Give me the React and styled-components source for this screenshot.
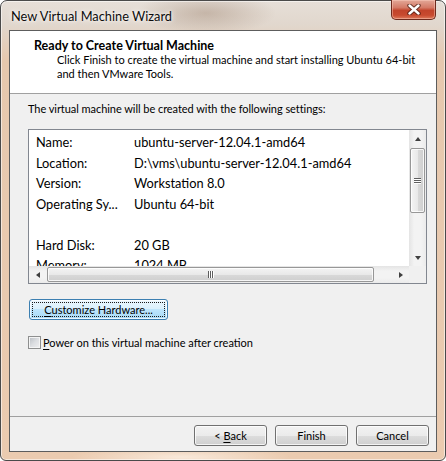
import React from 'react'
import styled, { createGlobalStyle } from 'styled-components'

const settings = [
    ['Name:', 'ubuntu-server-12.04.1-amd64'],
    ['Location:', 'D:\\vms\\ubuntu-server-12.04.1-amd64'],
    ['Version:', 'Workstation 8.0'],
    ['Operating Sy...', 'Ubuntu 64-bit'],
    ['', ''],
    ['Hard Disk:', '20 GB'],
    ['Memory:', '1024 MB'],
]

export default function App() {
    const spreadRows = () => settings.map((s, i) =>
        <Row key={i}>
            <Label>{s[0]}</Label>
            <Value>{s[1]}</Value>
        </Row>)

    return (
        <>
            <GlobalStyle />
            <Window>
                <TitleBar>
                    <Title>New Virtual Machine Wizard</Title>
                    <CloseButton>
                        <svg width="14" height="11" viewBox="0 0 14 11">
                            <path d="M2.5 1.5 L11.5 9.5 M11.5 1.5 L2.5 9.5" stroke="rgba(70,25,15,0.75)" strokeWidth="4.4" strokeLinecap="round" fill="none" />
                            <path d="M2.5 1.5 L11.5 9.5 M11.5 1.5 L2.5 9.5" stroke="#fff" strokeWidth="2.4" strokeLinecap="round" fill="none" />
                        </svg>
                    </CloseButton>
                </TitleBar>
                <Client>
                    <Header>
                        <Heading>Ready to Create Virtual Machine</Heading>
                        <Description>
                            Click Finish to create the virtual machine and start installing Ubuntu 64-bit<br />
                            and then VMware Tools.
                        </Description>
                    </Header>
                    <Body>
                        <Intro>The virtual machine will be created with the following settings:</Intro>
                        <ListBox>
                            <Rows>{spreadRows()}</Rows>
                            <VScroll>
                                <ArrowCell><Arrow dir="up" /></ArrowCell>
                                <VThumb><VGrip><i /><i /><i /></VGrip></VThumb>
                                <Track />
                                <ArrowCell><Arrow dir="down" /></ArrowCell>
                            </VScroll>
                            <HScroll>
                                <ArrowCell><Arrow dir="left" /></ArrowCell>
                                <HThumb><HGrip><i /><i /><i /></HGrip></HThumb>
                                <Track />
                                <ArrowCell><Arrow dir="right" /></ArrowCell>
                            </HScroll>
                            <Corner />
                        </ListBox>
                        <CustomizeButton $focused>
                            <FocusRect><u>C</u>ustomize Hardware...</FocusRect>
                        </CustomizeButton>
                        <CheckRow>
                            <CheckBox />
                            <span><u>P</u>ower on this virtual machine after creation</span>
                        </CheckRow>
                    </Body>
                    <Footer>
                        <Button>&lt;&nbsp;<u>B</u>ack</Button>
                        <Button>Finish</Button>
                        <Button>Cancel</Button>
                    </Footer>
                </Client>
            </Window>
        </>
    )
}

const GlobalStyle = createGlobalStyle`
    html, body {
        margin: 0;
        padding: 0;
        background: #fff;
    }
    body {
        font-family: Lato, "Open Sans", sans-serif;
        font-size: 11px;
        color: #000;
    }
    u {
        text-decoration-thickness: 1px;
        text-underline-offset: 2px;
    }
`

const Window = styled.div`
    box-sizing: border-box;
    width: 446px;
    height: 461px;
    border: 1px solid #4a4a4a;
    border-radius: 7px 7px 6px 6px;
    padding: 0 8px 8px;
    display: flex;
    flex-direction: column;
    background:
        radial-gradient(ellipse 70px 22px at 205px 12px, rgba(120, 85, 60, 0.28), transparent),
        radial-gradient(ellipse 110px 10px at 180px 456px, rgba(255, 245, 235, 0.7), transparent),
        linear-gradient(to bottom, #e6dfd8 0px, #e1d7cd 24px, #e6c8ae 60px, #ebcbb0 100%);
    box-shadow: inset 0 0 0 1px rgba(255, 255, 255, 0.55);
`

const TitleBar = styled.div`
    height: 29px;
    display: flex;
    justify-content: space-between;
    align-items: flex-start;
`

const Title = styled.div`
    padding: 8px 0 0 2px;
    font-size: 12.8px;
    line-height: 15px;
    color: #0c0c0c;
    text-shadow: 0 0 6px rgba(255, 255, 255, 0.95), 0 0 3px rgba(255, 255, 255, 0.9);
`

const CloseButton = styled.div`
    box-sizing: border-box;
    width: 45px;
    height: 20px;
    margin: -1px 1px 0 0;
    border: 1px solid #6e2a1d;
    border-top: none;
    border-radius: 0 0 5px 5px;
    display: flex;
    align-items: center;
    justify-content: center;
    background: linear-gradient(to bottom, #e3a898 0%, #d47a66 40%, #c2442b 55%, #c84a2f 80%, #de7a5c 100%);
    box-shadow: inset 0 0 0 1px rgba(255, 210, 195, 0.45);
`

const Client = styled.div`
    flex: 1;
    display: flex;
    flex-direction: column;
    border: 1px solid #5d5d5d;
    background: #f0f0f0;
`

const Header = styled.div`
    box-sizing: border-box;
    height: 63px;
    padding: 7px 0 0 24px;
    background: #fff;
    border-bottom: 1px solid #a0a0a0;
`

const Heading = styled.div`
    font-size: 12.5px;
    font-weight: 700;
    line-height: 15px;
`

const Description = styled.div`
    padding-left: 23px;
    line-height: 14px;
    white-space: nowrap;
`

const Body = styled.div`
    flex: 1;
    display: flex;
    flex-direction: column;
    align-items: flex-start;
    padding: 7px 0 0 18px;
`

const Intro = styled.div`
    line-height: 15px;
    letter-spacing: -0.05px;
`

const ListBox = styled.div`
    box-sizing: border-box;
    margin-top: 13px;
    width: 399px;
    height: 155px;
    border: 1px solid #828790;
    background: #fff;
    display: grid;
    grid-template-columns: 1fr 17px;
    grid-template-rows: 1fr 17px;
    overflow: hidden;
`

const Rows = styled.div`
    overflow: hidden;
    min-height: 0;
    padding-top: 2px;
    font-size: 12.8px;
`

const Row = styled.div`
    display: flex;
    height: 20.5px;
    line-height: 20.5px;
    white-space: nowrap;
`

const Label = styled.span`
    width: 98px;
    padding-left: 7px;
    flex-shrink: 0;
`

const Value = styled.span``

const VScroll = styled.div`
    display: flex;
    flex-direction: column;
    background: linear-gradient(to right, #e4e4e4, #f3f3f3 30%, #f3f3f3 70%, #ebebeb);
`

const HScroll = styled.div`
    display: flex;
    background: linear-gradient(to bottom, #e4e4e4, #f3f3f3 30%, #f3f3f3 70%, #ebebeb);
`

const Track = styled.div`
    flex: 1;
`

const Corner = styled.div`
    background: #f0f0f0;
`

const ArrowCell = styled.div`
    width: 17px;
    height: 17px;
    flex-shrink: 0;
    display: flex;
    align-items: center;
    justify-content: center;
`

const Arrow = styled.div`
    width: 0;
    height: 0;
    ${p => p.dir === 'up' && `
        border-left: 3.5px solid transparent;
        border-right: 3.5px solid transparent;
        border-bottom: 4px solid #404040;
    `}
    ${p => p.dir === 'down' && `
        border-left: 3.5px solid transparent;
        border-right: 3.5px solid transparent;
        border-top: 4px solid #404040;
    `}
    ${p => p.dir === 'left' && `
        border-top: 3.5px solid transparent;
        border-bottom: 3.5px solid transparent;
        border-right: 4px solid #404040;
    `}
    ${p => p.dir === 'right' && `
        border-top: 3.5px solid transparent;
        border-bottom: 3.5px solid transparent;
        border-left: 4px solid #404040;
    `}
`

const VThumb = styled.div`
    box-sizing: border-box;
    margin: 1px 0 0 1px;
    width: 15px;
    height: 65px;
    border: 1px solid #979797;
    border-radius: 2px;
    background: linear-gradient(to right, #f4f4f4 0%, #e9e9e9 50%, #d9d9d9 51%, #cfcfcf 100%);
    box-shadow: inset 0 0 0 1px rgba(255, 255, 255, 0.8);
    display: flex;
    align-items: center;
    justify-content: center;
`

const VGrip = styled.div`
    display: flex;
    flex-direction: column;
    gap: 1px;
    i {
        display: block;
        width: 7px;
        height: 1px;
        background: #5e5e5e;
        box-shadow: 0 1px 0 #fff;
    }
`

const HThumb = styled.div`
    box-sizing: border-box;
    margin: 1px 0 0 1px;
    width: 327px;
    height: 15px;
    border: 1px solid #979797;
    border-radius: 2px;
    background: linear-gradient(to bottom, #f4f4f4 0%, #e9e9e9 50%, #d9d9d9 51%, #cfcfcf 100%);
    box-shadow: inset 0 0 0 1px rgba(255, 255, 255, 0.8);
    display: flex;
    align-items: center;
    justify-content: center;
`

const HGrip = styled.div`
    display: flex;
    gap: 1px;
    i {
        display: block;
        width: 1px;
        height: 7px;
        background: #5e5e5e;
        box-shadow: 1px 0 0 #fff;
    }
`

const Button = styled.div`
    box-sizing: border-box;
    width: 73px;
    height: 21px;
    border: 1px solid #707070;
    border-radius: 3px;
    display: flex;
    align-items: center;
    justify-content: center;
    background: linear-gradient(to bottom, #f2f2f2 0%, #ebebeb 50%, #dddddd 50%, #cfcfcf 100%);
    box-shadow: inset 0 0 0 1px rgba(255, 255, 255, 0.75);
    line-height: 15px;
    cursor: default;
`

const CustomizeButton = styled(Button)`
    width: 139px;
    margin: 15px 0 0 1px;
    padding: 2px;
    border-color: ${p => p.$focused ? '#3c7fb1' : '#707070'};
    background: ${p => p.$focused
        ? 'linear-gradient(to bottom, #eaf6fd 0%, #d9f0fc 50%, #bee6fd 50%, #a7d9f5 100%)'
        : 'linear-gradient(to bottom, #f2f2f2 0%, #ebebeb 50%, #dddddd 50%, #cfcfcf 100%)'};
`

const FocusRect = styled.div`
    box-sizing: border-box;
    width: 100%;
    height: 100%;
    border: 1px dotted #1a1a1a;
    display: flex;
    align-items: center;
    justify-content: center;
`

const CheckRow = styled.div`
    margin-top: 15px;
    display: flex;
    align-items: center;
    gap: 2px;
    line-height: 15px;
`

const CheckBox = styled.div`
    box-sizing: border-box;
    width: 13px;
    height: 13px;
    border: 1px solid #8e8f8f;
    background: linear-gradient(135deg, #b8bcc2 0%, #dcdee1 50%, #f0f0f1 100%);
    box-shadow: inset 0 0 0 1px #f4f4f4;
`

const Footer = styled.div`
    box-sizing: border-box;
    height: 35px;
    border-top: 1px solid #a0a0a0;
    display: flex;
    justify-content: flex-end;
    align-items: flex-start;
    gap: 8px;
    padding: 8px 7px 0 0;
`
